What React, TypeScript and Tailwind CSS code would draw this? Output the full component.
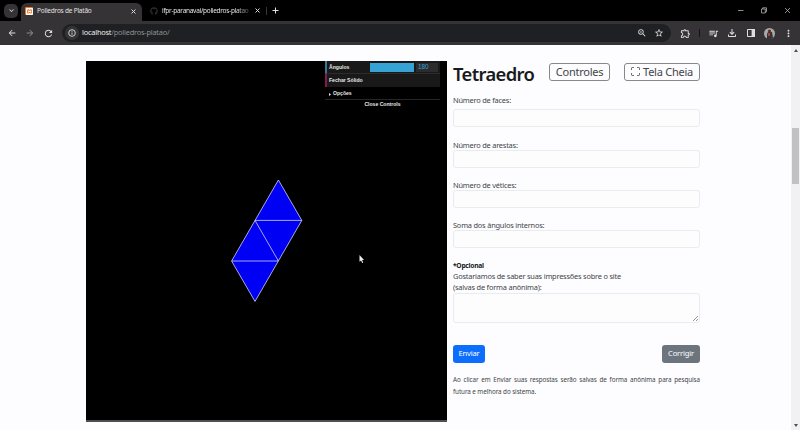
import React from "react";
import { MdOutlineExtension, MdQueueMusic, MdOutlineFileDownload, MdZoomIn, MdStarBorder, MdArrowBack, MdArrowForward, MdRefresh, MdMoreVert, MdKeyboardArrowDown } from "react-icons/md";
import { FaGithub } from "react-icons/fa";
import { SiXampp } from "react-icons/si";

function TabStrip() {
  return (
    <div className="flex h-[21px] items-center bg-black text-[6.5px] text-[#e3e3e3]">
      <div className="ml-1 flex h-[14px] w-[14px] shrink-0 items-center justify-center rounded-[5px] bg-[#353336]">
        <MdKeyboardArrowDown size={9} />
      </div>
      <div className="ml-[3px] mt-[3px] flex h-[18px] w-[121px] shrink-0 items-center rounded-t-[6px] bg-[#353336] pb-[2px]">
        <div className="ml-[4px] flex h-2 w-2 items-center justify-center rounded-[1px] bg-[#f37623] text-white">
          <SiXampp size={7} />
        </div>
        <span className="ml-[4px] w-[94px] whitespace-nowrap tracking-[-0.22px]">Poliedros de Platão</span>
        <Cross size={5} />
      </div>
      <FaGithub size={8} className="ml-[8px] shrink-0 text-[#292c30]" />
      <span className="ml-[4px] w-[87px] shrink-0 whitespace-nowrap tracking-[-0.28px] [mask-image:linear-gradient(to_right,black_85%,#0004)]">ifpr-paranavai/poliedros-platao</span>
      <span className="ml-[6px]"><Cross size={5} /></span>
      <div className="ml-[6px] h-2 w-px bg-[#343434]" />
      <svg className="ml-[5px]" width="7" height="7" viewBox="0 0 7 7" stroke="currentColor"><path d="M3.5.5v6M.5 3.5h6" /></svg>
      <svg className="ml-auto mr-[9px]" width="54" height="7" viewBox="0 0 54 7" fill="none" stroke="#b9b9b9" strokeWidth=".75">
        <path d="M1 3.5h5.5M24.5 2h3.8v4h-3.8zM25.7 2V.8h3.8v4h-1.2M48 1l5 5M53 1l-5 5" />
      </svg>
    </div>
  );
}

function Cross({ size }: { size: number }) {
  return (
    <svg width={size} height={size} viewBox="0 0 5 5" stroke="currentColor" strokeWidth=".95"><path d="M.5.5l4 4M4.5.5l-4 4" /></svg>
  );
}

function Toolbar() {
  return (
    <div className="flex h-[24px] items-center bg-[#353336] text-[#dedede]">
      <MdArrowBack size={10} className="ml-[7px]" />
      <MdArrowForward size={10} className="ml-[8px] text-[#8a898b]" />
      <MdRefresh size={11} className="ml-[8px]" />
      <div className="ml-[8px] flex h-[18px] w-[609px] items-center rounded-full bg-[#1f2023]">
        <div className="ml-[3px] flex h-[14px] w-[14px] items-center justify-center rounded-full bg-[#353538]">
          <svg width="8" height="8" viewBox="0 0 8 8" fill="none" stroke="currentColor" strokeWidth=".9"><circle cx="4" cy="4" r="3.3" /><path d="M4 3.5v2.2M4 1.9v.9" /></svg>
        </div>
        <span className="ml-[3px] text-[7.4px] tracking-[-0.22px] text-[#eee]">localhost<span className="text-[#8f9093]">/poliedros-platao/</span></span>
        <MdZoomIn size={10} className="ml-auto mr-[7px]" />
        <MdStarBorder size={10} className="mr-[7px]" />
      </div>
      <MdOutlineExtension size={11} className="ml-[9px]" />
      <div className="ml-[8px] h-2 w-px bg-[#131214]" />
      <MdQueueMusic size={11} className="ml-[8px]" />
      <MdOutlineFileDownload size={12} className="ml-[7px]" />
      <svg className="ml-[9px]" width="8" height="8" viewBox="0 0 8 8"><path d="M.5.5h7v7h-7z" fill="none" stroke="currentColor" /><path d="M4.6 0H8v8H4.6z" fill="currentColor" /></svg>
      <svg className="ml-[9px]" width="11" height="11" viewBox="0 0 11 11"><circle cx="5.5" cy="5.5" r="5.5" fill="#aaa9a5" /><path d="M3 11V6l1-2h4l1 6-2 1z" fill="#343338" /><circle cx="5.5" cy="3" r="1.6" fill="#56372e" /><path d="M4 5h2v3H4z" fill="#a64737" /></svg>
      <MdMoreVert size={11} className="ml-[8px]" />
    </div>
  );
}

function ControlPanel() {
  return (
    <div className="ml-[239px] w-[115px] font-['Liberation_Sans',Arial,sans-serif] text-[5.1px] font-bold leading-none text-[#e8e8e8]">
      <div className="flex h-[13px] items-center border-b border-l-2 border-b-[#2c2c2c] border-l-[#3d7795] bg-[#191919] pt-px">
        <span className="w-[43px] pl-[2px]">Ângulos</span>
        <div className="h-[9px] w-[44px] bg-[#35a3d3]" />
        <div className="ml-[2px] flex h-[9px] w-[22px] items-center bg-[#2c2c2c] pl-[2px] text-[6.4px] font-normal text-[#2fa1d6]">180</div>
      </div>
      <div className="flex h-[13px] items-center border-l-2 border-[#8c1847] bg-[#191919] pl-[2px]">Fechar Sólido</div>
      <div className="flex h-[13px] items-center border-b border-[#262626] pl-[4px] pt-[2px]">
        <svg className="mr-[2px]" width="2" height="3" viewBox="0 0 2 3" fill="currentColor"><path d="M0 0l2 1.5L0 3z" /></svg>
        Opções
      </div>
      <div className="flex h-[9px] items-center justify-center">Close Controls</div>
    </div>
  );
}

function Viewer() {
  return (
    <div className="ml-[86px] mt-[16px] h-[361px] w-[361px] shrink-0 border-b-2 border-[#4e4e4e] bg-black">
      <ControlPanel />
      <svg className="ml-[134px] mt-[60px]" width="150" height="140" viewBox="220 169 150 140">
        <path d="M278.4 180L301.8 220.4L255 301.4L231.6 261L255 220.4Z" fill="#0000f5" />
        <path d="M278.4 180L301.8 220.4L255 301.4L231.6 261L278.4 180M255 220.4h46.8M255 220.4L278.4 261M231.6 261h46.8" fill="none" stroke="#d2d0f5" strokeWidth=".8" />
        <path d="M359.5 255v6.7l1.5-1.3 1.2 2.5 1-.5-1.1-2.3h1.9z" fill="#eee" />
      </svg>
    </div>
  );
}

function Field({ label, first }: { label: string; first?: boolean }) {
  return (
    <label className={first ? "block h-[45px]" : "block h-[40px]"}>
      <span className={first ? "mb-[4px] block h-[10px] leading-[10px]" : "block h-[10px] leading-[10px]"}>{label}</span>
      <input className="block h-[18px] w-full rounded-[3px] border border-[#e8ebef] bg-white/40" />
    </label>
  );
}

function AnswerForm() {
  return (
    <div className="ml-[6px] w-[247px] pt-[17px] text-[7.4px] tracking-[-0.2px] text-[#42454a]">
      <div className="flex h-[19px] items-center">
        <h1 className="w-[96px] text-[18.4px] font-semibold leading-[19px] tracking-[-0.65px] text-[#171b20]"><span className="relative top-[2px]">Tetraedro</span></h1>
        <button className="h-[18px] w-[61px] rounded-[3px] border border-[#85898d] text-[11px] leading-[16px] tracking-[-0.25px]">Controles</button>
        <button className="ml-auto flex h-[18px] w-[76px] items-center justify-center gap-[3px] whitespace-nowrap rounded-[3px] border border-[#85898d] text-[11px] leading-[16px] tracking-[-0.25px]">
          <svg width="9" height="9" viewBox="0 0 9 9" fill="none" stroke="currentColor" strokeWidth=".8"><path d="M.5 3V1.2Q.5.5 1.2.5H3M6 .5h1.8q.7 0 .7.7V3M8.5 6v1.8q0 .7-.7.7H6M3 8.5H1.2Q.5 8.5.5 7.8V6" /></svg>
          Tela Cheia
        </button>
      </div>
      <div className="pt-[14px]">
        <Field label="Número de faces:" first />
        <Field label="Número de arestas:" />
        <Field label="Número de vétices:" />
        <Field label="Soma dos ângulos internos:" />
      </div>
      <div className="leading-[11px]">
        <strong className="block text-[6.7px] tracking-[-0.26px] text-[#171b20]">*Opcional</strong>
        <p>Gostariamos de saber suas impressões sobre o site</p>
        <p>(salvas de forma anônima):</p>
      </div>
      <div className="flex h-[30px] items-end justify-end rounded-[3px] border border-[#e8ebef] bg-white/40 p-px">
        <svg width="5" height="5" viewBox="0 0 5 5" stroke="#666" strokeWidth=".7"><path d="M0 5l5-5M3 5l2-2" /></svg>
      </div>
      <div className="mt-[22px] flex justify-between text-[7.6px] text-white">
        <button className="h-[18px] w-[32px] rounded-[3px] bg-[#0d6efd] tracking-[-0.18px]">Enviar</button>
        <button className="h-[18px] w-[38px] rounded-[3px] bg-[#6c757d] tracking-[-0.18px]">Corrigir</button>
      </div>
      <p className="mt-[11px] text-justify text-[6.3px] leading-[11.5px] tracking-[-0.08px]">Ao clicar em Enviar suas respostas serão salvas de forma anônima para pesquisa futura e melhora do sistema.</p>
    </div>
  );
}

function ScrollBar() {
  return (
    <div className="ml-auto flex h-full w-[9px] flex-col items-center bg-[#f1f0f3]">
      <svg className="mt-[4px]" width="4" height="3" viewBox="0 0 4 3" fill="#505050"><path d="M0 3l2-3 2 3z" /></svg>
      <div className="mt-[76px] h-[56px] w-[7px] bg-[#c1c0c2]" />
      <svg className="mb-[3px] mt-auto" width="4" height="3" viewBox="0 0 4 3" fill="#505050"><path d="M0 0l2 3 2-3z" /></svg>
    </div>
  );
}

export default function App() {
  return (
    <div className="h-[430px] w-[800px] overflow-hidden bg-[#fdfcfe] font-['Noto_Sans','Open_Sans',sans-serif]">
      <TabStrip />
      <Toolbar />
      <main className="flex h-[385px]">
        <Viewer />
        <AnswerForm />
        <ScrollBar />
      </main>
    </div>
  );
}
